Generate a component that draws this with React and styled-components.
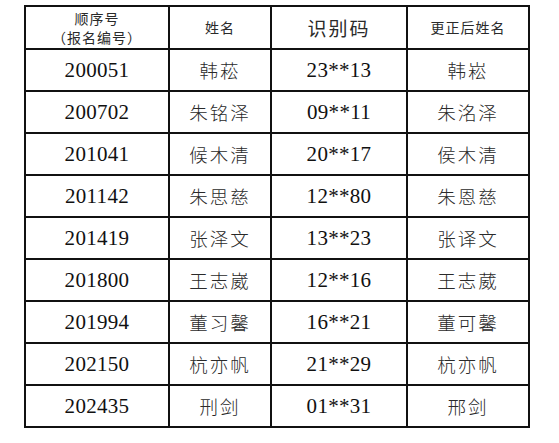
import React from 'react';
import styled, { createGlobalStyle } from 'styled-components';

const GlobalStyle = createGlobalStyle`
  html, body {
    margin: 0;
    padding: 0;
    background: #fff;
  }
`;

const rows = [
  ['200051', '韩菘', '23**13', '韩崧'],
  ['200702', '朱铭泽', '09**11', '朱洺泽'],
  ['201041', '候木清', '20**17', '侯木清'],
  ['201142', '朱思慈', '12**80', '朱恩慈'],
  ['201419', '张泽文', '13**23', '张译文'],
  ['201800', '王志崴', '12**16', '王志葳'],
  ['201994', '董习馨', '16**21', '董可馨'],
  ['202150', '杭亦帆', '21**29', '杭亦帆'],
  ['202435', '刑剑', '01**31', '邢剑'],
];

const Page = styled.div`
  padding: 5px 0 0 24px;
`;

const Table = styled.table`
  border-collapse: collapse;
  table-layout: fixed;
  width: 504px;
`;

const HeadCell = styled.th`
  height: 41px;
  padding: 0;
  border: 2px solid #111;
  font-weight: normal;
  text-align: center;
  vertical-align: middle;
  font-family: "Noto Sans CJK SC", sans-serif;
  font-size: ${(p) => (p.$big ? '19px' : '14px')};
  letter-spacing: ${(p) => (p.$big ? '2px' : '1px')};
  line-height: 19px;
  color: #2a2a2a;
`;

const Cell = styled.td`
  height: 40px;
  padding: 0;
  border: 2px solid #111;
  text-align: center;
  vertical-align: middle;
  color: ${(p) => (p.$serif ? '#111' : '#2a2a2a')};
  font-family: ${(p) =>
    p.$serif ? '"Liberation Serif", "Noto Sans CJK SC", serif' : '"Noto Sans CJK SC", sans-serif'};
  font-size: ${(p) => (p.$serif ? '21px' : '18.5px')};
  letter-spacing: ${(p) => (p.$serif ? '0.3px' : '2px')};
  font-weight: ${(p) => (p.$serif ? 'normal' : 300)};
`;

export default function App() {
  return (
    <>
      <GlobalStyle />
      <Page>
        <Table>
          <colgroup>
            <col style={{ width: 144 }} />
            <col style={{ width: 102 }} />
            <col style={{ width: 136 }} />
            <col style={{ width: 122 }} />
          </colgroup>
          <thead>
            <tr>
              <HeadCell>
                顺序号
                <br />
                （报名编号）
              </HeadCell>
              <HeadCell>姓名</HeadCell>
              <HeadCell $big>识别码</HeadCell>
              <HeadCell>更正后姓名</HeadCell>
            </tr>
          </thead>
          <tbody>
            {rows.map((r) => (
              <tr key={r[0]}>
                <Cell $serif>{r[0]}</Cell>
                <Cell>{r[1]}</Cell>
                <Cell $serif>{r[2]}</Cell>
                <Cell>{r[3]}</Cell>
              </tr>
            ))}
          </tbody>
        </Table>
      </Page>
    </>
  );
}
